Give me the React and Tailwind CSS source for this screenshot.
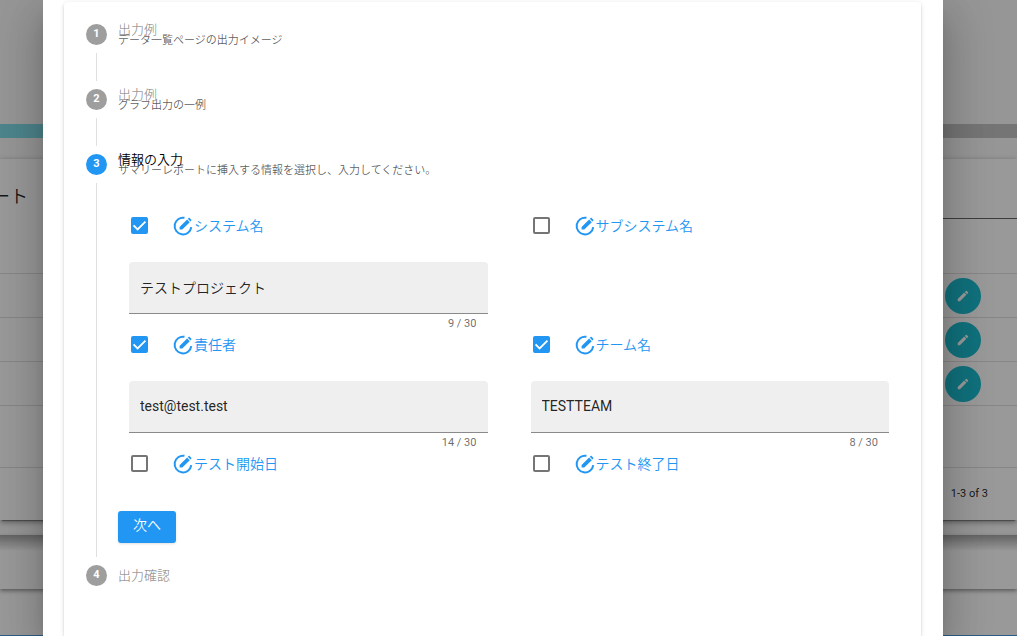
import { useState } from 'react'

const initialFields = [
  { id: 'system', label: 'システム名', checked: true, value: 'テストプロジェクト' },
  { id: 'subsystem', label: 'サブシステム名', checked: false, value: '' },
  { id: 'owner', label: '責任者', checked: true, value: 'test@test.test' },
  { id: 'team', label: 'チーム名', checked: true, value: 'TESTTEAM' },
  { id: 'start', label: 'テスト開始日', checked: false, value: '' },
  { id: 'end', label: 'テスト終了日', checked: false, value: '' },
]

function PencilIcon({ className }) {
  return (
    <svg className={className} viewBox="0 0 24 24" fill="currentColor" aria-hidden="true">
      <path d="M20.71,7.04C21.1,6.65 21.1,6 20.71,5.63L18.37,3.29C18,2.9 17.35,2.9 16.96,3.29L15.12,5.12L18.87,8.87M3,17.25V21H6.75L17.81,9.93L14.06,6.18L3,17.25Z" />
    </svg>
  )
}

function EditCircleIcon() {
  return (
    <svg className="size-[22px] shrink-0" viewBox="0 0 24 24" aria-hidden="true">
      <path d="M13.6 3.1A9.1 9.1 0 1 0 21 13.2" fill="none" stroke="currentColor" strokeWidth="2.2" />
      <path
        d="M19.2 3.2L21.1 5.1C21.4 5.4 21.4 5.8 21.1 6.1L20.1 7.1L17.2 4.2L18.2 3.2C18.5 2.9 18.9 2.9 19.2 3.2ZM16.5 4.9L19.4 7.8L11.2 15.8H8.3V13Z"
        fill="currentColor"
      />
    </svg>
  )
}

function StepHeader({ number, title, subtitle, active }) {
  return (
    <div className="flex h-[21px] items-center gap-[11px]">
      <span
        className={`flex size-[21px] shrink-0 items-center justify-center rounded-full text-[11px] font-bold text-white ${
          active ? 'bg-[#2196f3]' : 'bg-[#9e9e9e]'
        }`}
      >
        {number}
      </span>
      <div className={`flex flex-col text-[13px] leading-[11px] ${subtitle ? 'pt-0.5' : ''}`}>
        <span className={active ? 'text-black' : 'text-black/42'}>{title}</span>
        {subtitle && <small className="text-[11px] leading-3 text-black/65">{subtitle}</small>}
      </div>
    </div>
  )
}

function Field({ field, onChange }) {
  return (
    <div className="px-[11px]">
      <div className="flex h-[37px] items-center pl-0.5">
        <input
          id={field.id}
          type="checkbox"
          checked={field.checked}
          onChange={(e) => onChange({ ...field, checked: e.target.checked })}
          className="peer size-[17px] shrink-0 appearance-none rounded-xs border-2 border-[#757575] checked:border-[#2196f3] checked:bg-[#2196f3]"
        />
        <svg
          className="pointer-events-none invisible -ml-[17px] size-[17px] shrink-0 peer-checked:visible"
          viewBox="0 0 16 16"
          fill="none"
          stroke="white"
          strokeWidth="1.7"
          aria-hidden="true"
        >
          <path d="M2.4 7.9L6.2 11.7L13.6 4.3" />
        </svg>
        <label htmlFor={field.id} className="ml-6 flex items-center text-sm text-[#2196f3]">
          <EditCircleIcon />
          {field.label}
        </label>
      </div>
      {field.checked && (
        <div className="mt-[18px] mb-3">
          <input
            type="text"
            maxLength={30}
            aria-label={field.label}
            value={field.value}
            onChange={(e) => onChange({ ...field, value: e.target.value })}
            className="block h-[52px] w-full rounded-t border-b border-[#8a8a8a] bg-[#efefef] px-[11px] pb-0.5 text-sm text-black/87 outline-none"
          />
          <div className="-mb-5 px-[11px] text-right text-[11px] leading-5 text-black/60">
            {field.value.length} / 30
          </div>
        </div>
      )}
    </div>
  )
}

function ReportPage() {
  return (
    <div className="min-h-screen bg-[#fafafa] text-black/87">
      <div className="h-[124px]" />
      <div className="flex h-3.5">
        <div className="w-1/2 bg-[#80deea]" />
        <div className="w-1/2 bg-[#c4c4c4]" />
      </div>
      <section className="mt-[21px] bg-white shadow-[0_3px_1px_-2px_rgba(0,0,0,0.3),0_2px_6px_rgba(0,0,0,0.4)]">
        <div className="flex">
          <h2 className="-ml-2 h-[114px] w-1/2 pt-6 text-lg">ート</h2>
          <div className="-mr-2 flex-1 pt-[59px]">
            <div className="border-t border-black/60" />
          </div>
        </div>
        {[1, 2, 3].map((row) => (
          <div key={row} className="flex h-[44px] items-center justify-end border-t border-black/12 pr-9">
            <button
              type="button"
              aria-label="編集"
              className="flex size-9 items-center justify-center rounded-full bg-[#1bbdcf] text-white"
            >
              <PencilIcon className="size-3.5" />
            </button>
          </div>
        ))}
        <div className="h-[62px] border-t border-black/12" />
        <div className="flex h-[53px] items-center justify-end border-t border-black/12 pr-[29px] text-[11px]">
          1-3 of 3
        </div>
      </section>
      <section className="relative mt-[15px] h-[54px] bg-white shadow-[0_2px_4px_rgba(0,0,0,0.4)]">
        <div className="h-4 bg-linear-to-b from-black/35 to-transparent" />
      </section>
      <section className="h-[46px] bg-white" />
      <footer className="h-2 bg-[#4a9be0]" />
    </div>
  )
}

export default function App() {
  const [fields, setFields] = useState(initialFields)

  const handleChange = (next) => {
    setFields(fields.map((f) => (f.id === next.id ? next : f)))
  }

  return (
    <main className="relative h-screen overflow-hidden font-[Roboto,'Noto_Sans_CJK_JP_DemiLight','Noto_Sans_CJK_JP',sans-serif]">
      <ReportPage />

      {/* Dialog */}
      <div className="absolute inset-0 bg-black/40 pr-[74px] pl-[43px]">
        <div
          role="dialog"
          aria-modal="true"
          className="h-full bg-white pt-0.5 pr-[22px] pl-[21px] shadow-[0_11px_15px_-7px_rgba(0,0,0,0.2),0_24px_38px_3px_rgba(0,0,0,0.14),0_9px_46px_8px_rgba(0,0,0,0.12)]"
        >
          <div className="h-full rounded-t px-[22px] pt-[22px] shadow-[0_3px_1px_-2px_rgba(0,0,0,0.2),0_2px_2px_rgba(0,0,0,0.14),0_1px_5px_rgba(0,0,0,0.12)]">
            <StepHeader number={1} title="出力例" subtitle="データ一覧ページの出力イメージ" />
            <div className="my-2 ml-2.5 h-7 border-l border-black/12" />
            <StepHeader number={2} title="出力例" subtitle="グラフ出力の一例" />
            <div className="my-2 ml-2.5 h-7 border-l border-black/12" />
            <StepHeader number={3} title="情報の入力" subtitle="サマリーレポートに挿入する情報を選択し、入力してください。" active />
            <div className="my-2 ml-2.5 border-l border-black/12 pt-6 pb-3.5 pl-[21px]">
              <div className="-mr-px grid grid-cols-2 gap-x-[21px]">
                {fields.map((field) => (
                  <Field key={field.id} field={field} onChange={handleChange} />
                ))}
              </div>
              <button
                type="button"
                className="mt-[29px] block h-8 rounded-[3px] bg-[#2196f3] px-[15px] pb-1 text-sm font-medium text-white shadow-sm"
              >
                次へ
              </button>
            </div>
            <StepHeader number={4} title="出力確認" />
          </div>
        </div>
      </div>
    </main>
  )
}
